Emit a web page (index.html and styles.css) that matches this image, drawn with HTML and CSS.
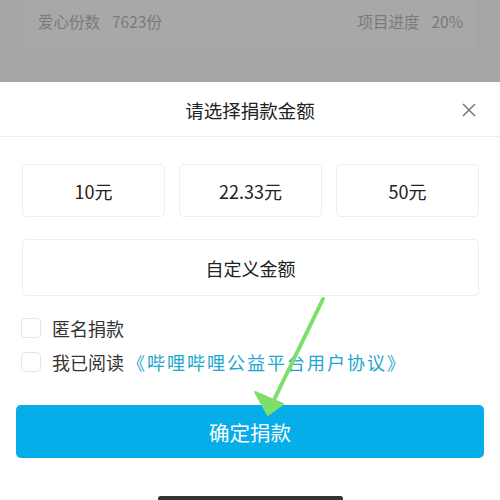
FILE: index.html
```html
<!DOCTYPE html>
<html lang="zh-CN">
<head>
<meta charset="utf-8">
<title>请选择捐款金额</title>
<link rel="stylesheet" href="styles.css">
</head>
<body>
<div class="screen">
  <div class="backdrop">
    <div class="stats-card">
      <span class="stat">爱心份数<span class="stat-val">7623份</span></span>
      <span class="stat">项目进度<span class="stat-val">20%</span></span>
    </div>
  </div>
  <div class="sheet">
    <div class="sheet-head">
      <span class="sheet-title">请选择捐款金额</span>
      <svg class="close" viewBox="0 0 14 14" width="14" height="14">
        <path d="M1 1 L13 13 M13 1 L1 13" stroke="#777" stroke-width="1.5" fill="none"/>
      </svg>
    </div>
    <div class="sheet-body">
      <div class="amounts">
        <div class="amount">10元</div>
        <div class="amount">22.33元</div>
        <div class="amount">50元</div>
      </div>
      <div class="amount custom">自定义金额</div>
      <label class="check-row"><span class="box"></span>匿名捐款</label>
      <label class="check-row"><span class="box"></span>我已阅读<a class="link">《哔哩哔哩公益平台用户协议》</a></label>
    </div>
    <div class="confirm">确定捐款</div>
    <div class="home-bar"></div>
  </div>
  <svg class="pointer" viewBox="0 0 500 500" width="500" height="500">
    <path d="M323 299 L273 402" stroke="#7ddf6a" stroke-width="4" stroke-linecap="round" fill="none"/>
    <path d="M268 415 L255 392 L283 404 Z" fill="#7ddf6a" stroke="#7ddf6a" stroke-width="2" stroke-linejoin="round"/>
  </svg>
</div>
</body>
</html>
```
FILE: styles.css
```css
* { box-sizing: border-box; }
html, body { margin: 0; padding: 0; }
body {
  font-family: "Noto Sans CJK SC", "Noto Sans", Roboto, sans-serif;
  background: #fff;
}
.screen {
  position: relative;
  width: 500px;
  height: 500px;
  overflow: hidden;
  display: flex;
  flex-direction: column;
}
.backdrop {
  height: 82px;
  background: #a6a6a6;
  padding: 0 23px;
  flex: none;
}
.stats-card {
  height: 48px;
  background: #a8a8a8;
  border-radius: 0 0 6px 6px;
  display: flex;
  justify-content: space-between;
  align-items: flex-start;
  padding: 5px 14px 0 15px;
  color: #7a7a7a;
  font-size: 15.5px;
  line-height: 32px;
}
.stat-val { margin-left: 12px; }
.sheet {
  flex: 1;
  background: #fff;
  display: flex;
  flex-direction: column;
}
.sheet-head {
  height: 55px;
  border-bottom: 1px solid #eeeeee;
  display: flex;
  align-items: center;
  justify-content: center;
  position: relative;
}
.sheet-title {
  font-size: 18.5px;
  color: #222;
  margin-top: 1px;
}
.close {
  position: absolute;
  right: 24px;
  top: 21px;
}
.sheet-body {
  padding: 27px 21px 0 22px;
  display: flex;
  flex-direction: column;
}
.amounts {
  display: grid;
  grid-template-columns: 1fr 1fr 1fr;
  gap: 14px;
}
.amount {
  height: 53px;
  border: 1px solid #eeeeee;
  border-radius: 5px;
  display: flex;
  align-items: center;
  justify-content: center;
  font-size: 18px;
  color: #222;
}
.custom {
  margin-top: 22px;
  height: 57px;
}
.check-row {
  display: flex;
  align-items: center;
  font-size: 18px;
  color: #333;
  height: 20px;
  margin-left: -1px;
}
.check-row:first-of-type { margin-top: 22px; }
.check-row + .check-row { margin-top: 14px; }
.box {
  width: 20px;
  height: 20px;
  border: 1px solid #e6e6e6;
  border-radius: 4px;
  margin-right: 11px;
  flex: none;
}
.link {
  color: #1da6cf;
  margin-left: 3px;
  letter-spacing: 2px;
}
.confirm {
  margin: 33px 16px 0 16px;
  height: 53px;
  background: #05ade9;
  border-radius: 5px;
  color: #fff;
  font-size: 20.5px;
  display: flex;
  align-items: center;
  justify-content: center;
}
.home-bar {
  margin: 38px auto 0;
  width: 185px;
  height: 5px;
  border-radius: 3px;
  background: #333;
}
.pointer {
  position: absolute;
  left: 0;
  top: 0;
  pointer-events: none;
}
```
